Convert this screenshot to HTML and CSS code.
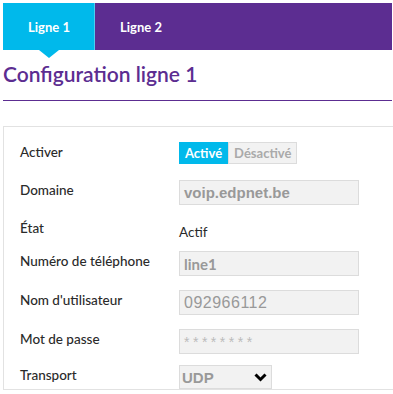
FILE: index.html
```html
<!doctype html>
<html>
  <head>
    <meta charset="utf-8">
    <title>Configuration ligne 1</title>
    <link rel="stylesheet" href="styles.css">
  </head>
  <body>
    <div class="page">
      <nav class="tabs">
        <a class="tab tab-active" href="#">Ligne 1</a>
        <a class="tab" href="#">Ligne 2</a>
      </nav>

      <h1 class="title">Configuration ligne 1</h1>

      <section class="panel">
        <div class="row">
          <span class="label">Activer</span>
          <div class="toggle">
            <span class="toggle-on">Activé</span>
            <span class="toggle-off">Désactivé</span>
          </div>
        </div>
        <div class="row">
          <span class="label">Domaine</span>
          <span class="field field-bold">voip.edpnet.be</span>
        </div>
        <div class="row row-short">
          <span class="label">État</span>
          <span class="status">Actif</span>
        </div>
        <div class="row row-tall">
          <span class="label">Numéro de téléphone</span>
          <span class="field field-page">line1</span>
        </div>
        <div class="row row-tall">
          <span class="label">Nom d'utilisateur</span>
          <span class="field field-num">092966112</span>
        </div>
        <div class="row row-mid">
          <span class="label">Mot de passe</span>
          <span class="field field-pass">********</span>
        </div>
        <div class="row row-last">
          <span class="label">Transport</span>
          <span class="select">
            UDP
            <svg class="chevron" width="13" height="9" viewBox="0 0 13 9">
              <path d="M1.5 1.5 L6.5 6.5 L11.5 1.5" fill="none" stroke="#000" stroke-width="3"/>
            </svg>
          </span>
        </div>
      </section>
    </div>
  </body>
</html>
```

FILE: styles.css
```css
:root {
  --purple: #5c2d91;
  --cyan: #00b9eb;
  --text-color: #2a2a2a;
  --field-bg: #f2f2f2;
  --field-border: #dcdcdc;
  --field-text: #999;
}

body {
  margin: 0;
  font-family: Lato, "Noto Sans", sans-serif;
  color: var(--text-color);
  background: #fff;
  overflow: hidden;
}

.page {
  padding: 3px 1px 0 3px;
}

.tabs {
  display: flex;
  height: 47px;
  background: var(--purple);
}

.tab {
  position: relative;
  width: 92px;
  display: flex;
  align-items: center;
  justify-content: center;
  color: #fff;
  font-size: 13px;
  font-weight: bold;
  text-decoration: none;
}

.tab-active {
  background: var(--cyan);
  box-shadow: inset -1px 0 0 #4fcdf0;
}

.tab-active::after {
  content: '';
  position: absolute;
  top: 100%;
  left: 50%;
  margin-left: -10px;
  border-left: 10px solid transparent;
  border-right: 10px solid transparent;
  border-top: 8px solid var(--cyan);
}

.title {
  margin: 0;
  padding: 11px 0 13px;
  font-size: 21px;
  line-height: 26px;
  font-weight: 600;
  color: var(--purple);
  border-bottom: 1px solid var(--purple);
}

.panel {
  margin: 25px -10px 0 0;
  padding: 15px 0 0 16px;
  border: 1px solid #e2e2e2;
  border-right: none;
}

.row {
  display: grid;
  grid-template-columns: 159px 180px;
  align-items: start;
  height: 38px;
}

.row-short {
  height: 33px;
}

.row-tall {
  height: 39px;
}

.row-mid {
  height: 36px;
}

.row-last {
  height: 24px;
}

.label {
  font-size: 13.5px;
  line-height: 20px;
  font-weight: 500;
}

.toggle {
  display: flex;
  height: 22px;
  font-size: 13px;
  font-weight: bold;
}

.toggle-on {
  display: flex;
  align-items: center;
  padding: 0 6px;
  color: #fff;
  background: var(--cyan);
}

.toggle-off {
  display: flex;
  align-items: center;
  padding: 0 5px;
  color: #aaa;
  background: var(--field-bg);
  border: 1px solid var(--field-border);
}

.field {
  box-sizing: border-box;
  height: 25px;
  padding: 0 4px;
  display: flex;
  align-items: center;
  font-family: "Liberation Sans", Arial, sans-serif;
  font-size: 15px;
  color: var(--field-text);
  background: var(--field-bg);
  border: 1px solid var(--field-border);
}

.field-bold {
  font-weight: bold;
}

.field-page {
  font-family: Lato, "Noto Sans", sans-serif;
  font-weight: bold;
}

.field-num {
  font-size: 16px;
  letter-spacing: 0.5px;
}

.field-pass {
  font-size: 14px;
  letter-spacing: 3.5px;
  color: #bbb;
}

.status {
  padding-top: 4px;
  font-size: 13.5px;
  line-height: 20px;
}

.select {
  box-sizing: border-box;
  width: 93px;
  height: 24px;
  padding: 0 4px 0 2px;
  display: flex;
  align-items: center;
  justify-content: space-between;
  font-family: "Liberation Sans", Arial, sans-serif;
  font-size: 15px;
  font-weight: bold;
  color: var(--field-text);
  background: var(--field-bg);
  border: 1px solid var(--field-border);
}
```
